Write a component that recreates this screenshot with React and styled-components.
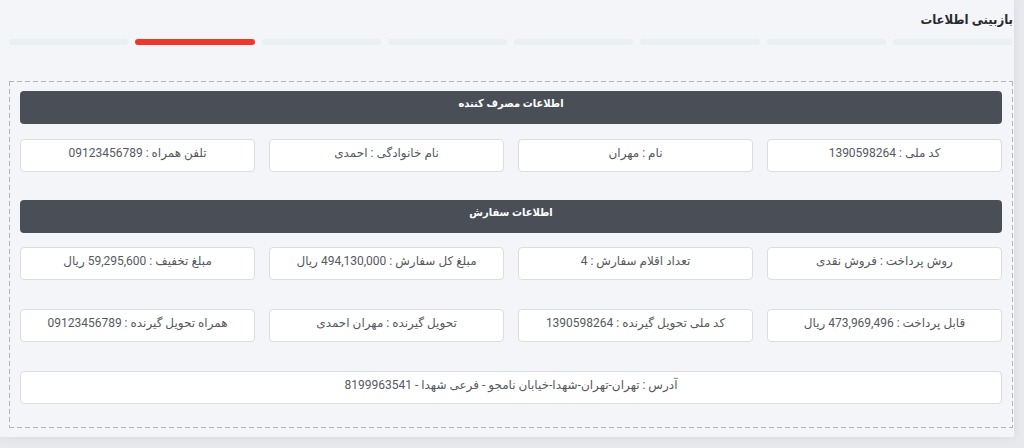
import React from "react";
import styled, { createGlobalStyle } from "styled-components";

const Global = createGlobalStyle`
  * { box-sizing: border-box; }
  html, body { margin: 0; padding: 0; }
  body {
    background: #e8e9ed;
    font-family: Roboto, "DejaVu Sans", sans-serif;
    overflow: hidden;
  }
`;

const Page = styled.div`
  width: 1024px;
  height: 448px;
  direction: rtl;
`;

const Card = styled.div`
  width: 1014px;
  height: 437px;
  margin-right: 10px;
  background: #f4f5f9;
  box-shadow: 0 0 10px rgba(0, 0, 0, 0.07);
  padding: 10px 1px 0 9px;
`;

const Title = styled.h1`
  margin: 0;
  font-family: Roboto, "DejaVu Sans Condensed", "DejaVu Sans", sans-serif;
  font-size: 13px;
  line-height: 20px;
  font-weight: 700;
  color: #262a30;
`;

const Steps = styled.div`
  display: grid;
  grid-template-columns: repeat(8, 1fr);
  column-gap: 7px;
  margin: 9px 1px 0 0;
`;

const Step = styled.div`
  height: 6px;
  border-radius: 3px;
  background: ${(p) => (p.$active ? "#f3342a" : "#eaeff2")};
`;

const dash = "#b4b5b8";

const Dashed = styled.div`
  margin-top: 36px;
  padding: 10px 11px 24px 11px;
  display: flex;
  flex-direction: column;
  background-image:
    repeating-linear-gradient(to right, ${dash} 0 5px, transparent 5px 8px),
    repeating-linear-gradient(to right, ${dash} 0 5px, transparent 5px 8px),
    repeating-linear-gradient(to bottom, ${dash} 0 5px, transparent 5px 8px),
    repeating-linear-gradient(to bottom, ${dash} 0 5px, transparent 5px 8px);
  background-size: 100% 1px, 100% 1px, 1px 100%, 1px 100%;
  background-position: top left, bottom left, top left, top right;
  background-repeat: no-repeat;
`;

const SectionBar = styled.div`
  height: 33px;
  border-radius: 4px;
  background: #4a4f57;
  color: #ffffff;
  font-family: Roboto, "DejaVu Sans Condensed", "DejaVu Sans", sans-serif;
  font-size: 11px;
  font-weight: 700;
  text-align: center;
  padding-top: 5px;
  line-height: 16px;
  margin-bottom: ${(p) => p.$mb}px;
`;

const Grid = styled.div`
  display: grid;
  grid-template-columns: repeat(4, 1fr);
  column-gap: 14px;
  margin-bottom: ${(p) => p.$mb}px;
`;

const Field = styled.div`
  height: 33px;
  background: #ffffff;
  border: 1px solid #dcdde1;
  border-radius: 4px;
  color: #555a60;
  font-size: 12px;
  line-height: 16px;
  padding-top: 5px;
  text-align: center;
  white-space: nowrap;
`;

const customer = [
  "کد ملی : 1390598264",
  "نام : مهران",
  "نام خانوادگی : احمدی",
  "تلفن همراه : 09123456789",
];

const order1 = [
  "روش پرداخت : فروش نقدی",
  "تعداد اقلام سفارش : 4",
  "مبلغ کل سفارش : 494,130,000 ریال",
  "مبلغ تخفیف : 59,295,600 ریال",
];

const order2 = [
  "قابل پرداخت : 473,969,496 ریال",
  "کد ملی تحویل گیرنده : 1390598264",
  "تحویل گیرنده : مهران احمدی",
  "همراه تحویل گیرنده : 09123456789",
];

export default function App() {
  return (
    <Page>
      <Global />
      <Card>
        <Title>بازبینی اطلاعات</Title>
        <Steps>
          {Array.from({ length: 8 }).map((_, i) => (
            <Step key={i} $active={i === 6} />
          ))}
        </Steps>
        <Dashed>
          <SectionBar $mb={15}>اطلاعات مصرف کننده</SectionBar>
          <Grid $mb={28}>
            {customer.map((t) => (
              <Field key={t}>{t}</Field>
            ))}
          </Grid>
          <SectionBar $mb={14}>اطلاعات سفارش</SectionBar>
          <Grid $mb={29}>
            {order1.map((t) => (
              <Field key={t}>{t}</Field>
            ))}
          </Grid>
          <Grid $mb={29}>
            {order2.map((t) => (
              <Field key={t}>{t}</Field>
            ))}
          </Grid>
          <Field>آدرس : تهران-تهران-شهدا-خیابان نامجو - فرعی شهدا - 8199963541</Field>
        </Dashed>
      </Card>
    </Page>
  );
}
